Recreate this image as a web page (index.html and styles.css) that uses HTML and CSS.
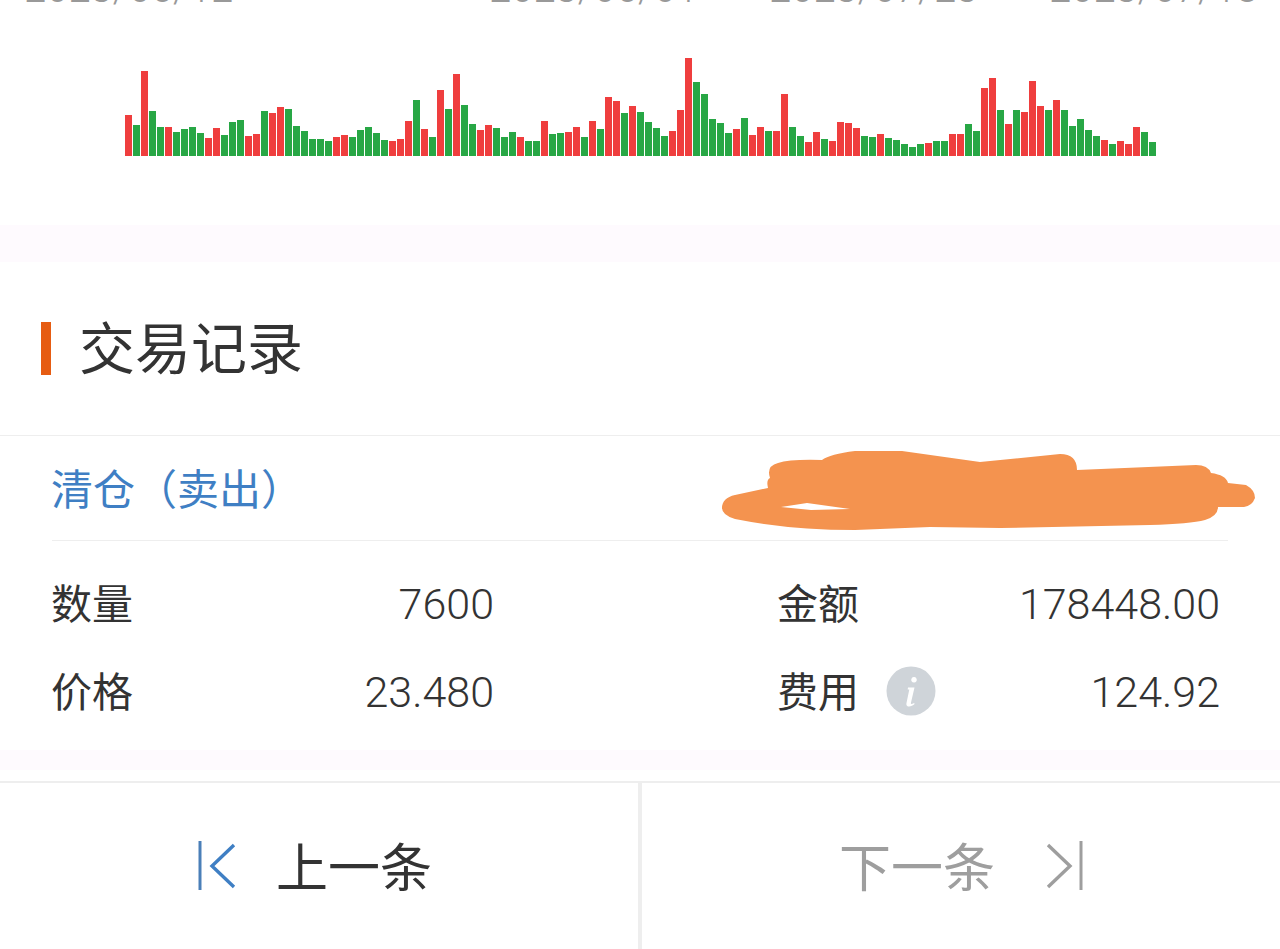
FILE: index.html

```html
<!DOCTYPE html>
<html lang="zh-CN">
<head>
    <meta charset="UTF-8">
    <title>交易记录</title>
    <link rel="stylesheet" href="styles.css">
</head>
<body>
    <div class="chart-panel">
        <div class="date-axis">
            <span class="date-a">2023/06/12</span>
            <span class="date-b">2023/06/01</span>
            <span class="date-c">2023/07/23</span>
            <span class="date-d">2023/07/18</span>
        </div>
        <div class="volume-bars" id="volumeBars"></div>
    </div>
    <div class="band"></div>

    <div class="section-title">
        <span class="title-mark"></span>
        <h2>交易记录</h2>
    </div>

    <div class="trade">
        <div class="trade-head">
            <span class="trade-type">清仓（卖出）</span>
            <svg class="scribble" width="540" height="82" viewBox="720 450 540 82">
                <path fill-rule="evenodd" d="M722 508Q722 498 735 495L768 488Q766 480 770 478Q766 466 778 463Q790 459 822 460Q830 454 855 451L902 451L980 462L1060 454Q1077 454 1077 470L1196 465Q1208 465 1211 473Q1226 475 1228 483L1246 485Q1255 490 1255 498Q1252 506 1244 507L1218 507Q1218 516 1205 520Q1190 524 1150 525L1000 528L930 527L855 530Q790 530 735 519Q722 515 722 508ZM781 507L807 503L850 509L811 510Z" />
            </svg>
        </div>
        <div class="trade-grid">
            <div class="cell">
                <span class="cell-label">数量</span>
                <span class="cell-value">7600</span>
            </div>
            <div class="cell">
                <span class="cell-label">金额</span>
                <span class="cell-value">178448.00</span>
            </div>
            <div class="cell">
                <span class="cell-label">价格</span>
                <span class="cell-value">23.480</span>
            </div>
            <div class="cell">
                <span class="cell-label">费用</span>
                <svg class="info-icon" width="50" height="50" viewBox="0 0 50 50">
                    <circle cx="25" cy="25" r="24.5" fill="#cfd4d9" />
                    <path d="M28 11a2.8 2.8 0 1 0 0.01 0M22 21.5h6.5l-3.6 15.5c-0.3 1.4 0.8 1.5 3.2 0l0.5 1c-3.2 3.2-8.8 3.6-8.2-0.6l2.9-13.9h-1.6Z" fill="#fff" />
                </svg>
                <span class="cell-value">124.92</span>
            </div>
        </div>
    </div>
    <div class="band band-bottom"></div>

    <div class="pager">
        <a class="pager-btn pager-prev">
            <svg width="40" height="50" viewBox="0 0 40 50">
                <path d="M2 0V49" stroke="#4a7fb8" stroke-width="3" fill="none" />
                <path d="M36 4L14 25L36 46" stroke="#3f7fc4" stroke-width="3.4" fill="none" />
            </svg>
            <span>上一条</span>
        </a>
        <a class="pager-btn pager-next">
            <span>下一条</span>
            <svg width="40" height="50" viewBox="0 0 40 50">
                <path d="M3 4L25 25L3 46" stroke="#9e9e9e" stroke-width="3.4" fill="none" />
                <path d="M36 0V49" stroke="#9e9e9e" stroke-width="3" fill="none" />
            </svg>
        </a>
    </div>

    <script src="chart.js"></script>
</body>
</html>
```

FILE: styles.css

```css
* {
    box-sizing: border-box;
}
html, body {
    height: 100%;
}
body {
    margin: 0;
    overflow: hidden;
    background-color: #fff;
    font-family: Roboto, "Noto Sans CJK SC", sans-serif;
    color: #333;
}
.chart-panel {
    height: 225px;
    overflow: hidden;
}
.date-axis {
    position: relative;
    height: 58px;
    font-size: 40px;
    font-weight: 300;
    line-height: 1;
    color: #999;
}
.date-axis span {
    position: absolute;
    bottom: 49px;
}
.date-a { left: 24px; }
.date-b { left: 489px; }
.date-c { left: 769px; }
.date-d { left: 1049px; }
.volume-bars {
    display: flex;
    align-items: flex-end;
    gap: 1.5px;
    height: 98px;
    margin-left: 125px;
}
.volume-bars i {
    display: block;
    flex: none;
    width: 6.5px;
}
.volume-bars .up {
    background-color: #ef3e3e;
}
.volume-bars .down {
    background-color: #28a745;
}
.band {
    height: 37px;
    background-color: #fefafe;
}
.section-title {
    display: flex;
    align-items: center;
    height: 173px;
    padding-left: 41px;
    padding-bottom: 1px;
}
.title-mark {
    width: 10px;
    height: 53px;
    background-color: #e65c12;
}
.section-title h2 {
    margin: 0 0 0 28px;
    padding-top: 4px;
    font-size: 56px;
    font-weight: 400;
    line-height: 1;
    color: #333;
}
.trade {
    border-top: 1px solid #eee;
    padding: 0 52px;
}
.trade-head {
    position: relative;
    display: flex;
    align-items: center;
    height: 105px;
    border-bottom: 1px solid #eee;
}
.trade-type {
    margin: 0 0 4px -1px;
    font-size: 42px;
    color: #3f7fc4;
}
.scribble {
    position: absolute;
    left: 668px;
    top: 14px;
    fill: #f4934f;
    overflow: visible;
}
.trade-grid {
    display: grid;
    grid-template-columns: 442px 442px;
    grid-auto-rows: 88px;
    align-content: start;
    column-gap: 284px;
    padding-top: 19px;
    height: 209px;
}
.cell {
    display: flex;
    align-items: center;
    font-size: 41px;
}
.cell-label {
    margin: 0 0 6px -1px;
}
.cell-value {
    margin-left: auto;
    font-size: 43px;
    font-weight: 300;
}
.info-icon {
    margin: 0 0 2px 27px;
}
.band-bottom {
    height: 20px;
}
.pager {
    display: flex;
    height: 168px;
    margin-top: 11px;
    border-top: 2px solid #eee;
}
.pager-btn {
    display: flex;
    align-items: center;
    justify-content: center;
    font-size: 52px;
}
.pager-btn span {
    margin-bottom: 4px;
}
.pager-prev {
    flex: 1;
    gap: 38px;
    padding-right: 8px;
}
.pager-next {
    flex: none;
    width: 642px;
    gap: 50px;
    padding-left: 2px;
    border-left: 4px solid #eee;
    color: #9e9e9e;
}
```

FILE: chart.js

```js
// volume bars, r = up day, g = down day
var bars = 'r41 g31 r85 g45 g29 r29 g24 g27 g29 g23 r18 r28 g21 g34 g36 r20 r22 g45 r43 r49 g47 g30 g25 g17 g17 g15 r19 r21 g19 g26 g29 g23 g16 r15 r17 r35 g56 r27 g19 r66 g47 r82 g51 g32 r26 r31 g28 g19 g24 r19 g15 g15 r35 g22 g23 r24 r29 g19 r35 g27 r59 r55 g43 r50 g44 g34 g28 g20 r25 r46 r98 g74 g62 g37 g33 g23 r27 g38 r21 r29 g25 r25 r62 g29 g20 r14 r24 g17 r15 r34 r33 r28 g20 g19 r22 g18 g16 g12 g9 g12 r13 g15 g15 r22 r22 g32 g25 r68 r78 g46 r32 g46 r44 r75 r50 g46 r56 g46 g30 g37 g26 g20 r16 g12 r15 r12 r29 g24 g14'.split(' ');
var box = document.getElementById('volumeBars');

bars.forEach(function(bar) {
    var el = document.createElement('i');
    el.className = bar[0] === 'r' ? 'up' : 'down';
    el.style.height = bar.slice(1) + 'px';
    box.appendChild(el);
});
```
